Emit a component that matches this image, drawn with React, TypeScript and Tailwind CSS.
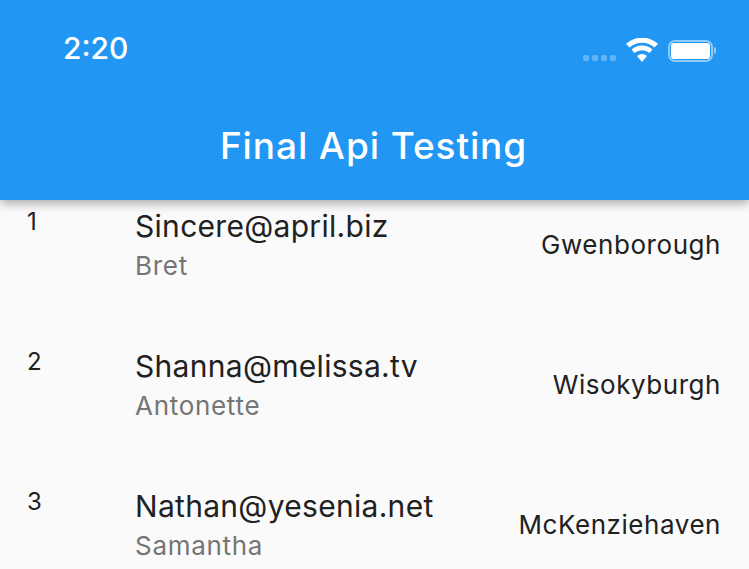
const rows = [
  { id: 1, email: "Sincere@april.biz", user: "Bret", city: "Gwenborough" },
  { id: 2, email: "Shanna@melissa.tv", user: "Antonette", city: "Wisokyburgh" },
  { id: 3, email: "Nathan@yesenia.net", user: "Samantha", city: "McKenziehaven" },
];

const App = () => {
  return (
    <div className="w-[749px] h-[569px] overflow-hidden bg-[#fafafa] font-['Inter',sans-serif]">
      <header className="relative z-10 h-[200px] bg-[#2196f3] shadow-[0_3px_10px_rgba(0,0,0,0.35)] text-white">
        <div className="flex h-[97px] items-center justify-between pl-[63px] pr-[33px]">
          <span className="text-[30px] font-medium">2:20</span>
          <div className="flex items-end pt-[2px]">
            <div className="flex gap-[3px] mb-[1px] mr-[10px] opacity-30">
              <i className="size-[6px] rounded-[2px] bg-white" />
              <i className="size-[6px] rounded-[2px] bg-white" />
              <i className="size-[6px] rounded-[2px] bg-white" />
              <i className="size-[6px] rounded-[2px] bg-white" />
            </div>
            <svg width="32" height="24" viewBox="0 0 32 24" fill="white" className="mr-[10px]">
              <path d="M16 24l-5-6a7.500 7.500 0 0 1 10 0zM8.500 15l-3-3.500a16 16 0 0 1 21 0l-3 3.500a11.500 11.500 0 0 0-15 0zM3.500 9.500L0 5.800a24 24 0 0 1 32 0l-3.500 3.700a19 19 0 0 0-25 0z" />
            </svg>
            <div className="flex items-center gap-[1px]">
              <div className="w-[45px] h-[22px] rounded-[7px] border-2 border-white/50 p-[1px]">
                <div className="h-full rounded-[3px] bg-white" />
              </div>
              <div className="w-[2px] h-[7px] rounded-r bg-white/50" />
            </div>
          </div>
        </div>
        <h1 className="mt-[27px] pr-[2px] text-center text-[37px] leading-[44px] tracking-[0.9px] font-medium">Final Api Testing</h1>
      </header>
      <main>
        {rows.map((r) => (
          <div key={r.id} className="flex h-[140px] pl-[27px] pr-[28px] text-[#212121]">
            <span className="w-[108px] pt-[7px] text-[24px] leading-[30px]">{r.id}</span>
            <div className="flex-1 pt-[8px]">
              <p className="text-[30px] leading-[36px] tracking-[0.3px]">{r.email}</p>
              <p className="mt-[6px] text-[26px] leading-[32px] tracking-[0.7px] text-[#757575]">{r.user}</p>
            </div>
            <span className="pt-[27px] text-[26px] leading-[36px] tracking-[0.55px]">{r.city}</span>
          </div>
        ))}
      </main>
    </div>
  );
};

export default App;
